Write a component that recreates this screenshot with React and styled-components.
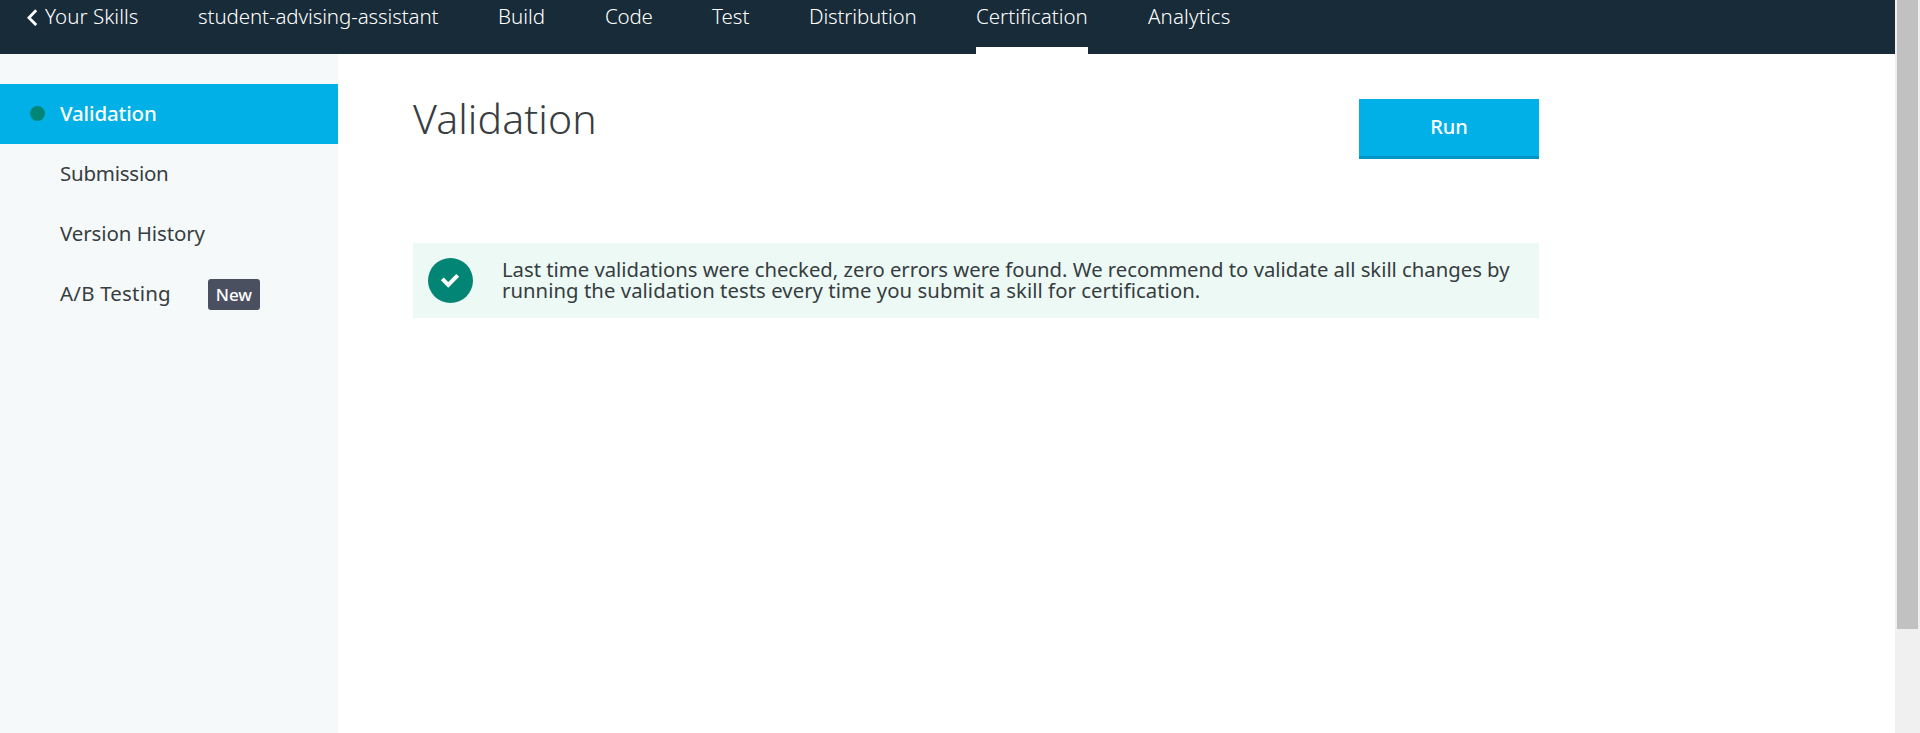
import React from 'react';
import styled, { createGlobalStyle } from 'styled-components';

const GlobalStyle = createGlobalStyle`
  * { box-sizing: border-box; }
  body {
    margin: 0;
    background: #fff;
    color: #373d41;
    font-family: "Noto Sans", "Open Sans", sans-serif;
    overflow: hidden;
  }
`;

const Viewport = styled.div`
  display: flex;
  width: 1920px;
  height: 733px;
`;

const Page = styled.div`
  display: flex;
  flex-direction: column;
  flex: 1;
`;

const TopNav = styled.nav`
  display: flex;
  align-items: flex-start;
  gap: 60px;
  height: 54px;
  padding-left: 27px;
  background: #182b38;
  color: #fff;
`;

const NavItem = styled.a`
  display: flex;
  align-items: flex-start;
  flex: none;
  width: ${(p) => p.$width}px;
  height: 54px;
  padding-top: 2px;
  border-bottom: 7px solid ${(p) => (p.$active ? '#fff' : 'transparent')};
  font-size: 20.5px;
  font-weight: 300;
  line-height: 28px;
  letter-spacing: ${(p) => p.$track || 0}px;
  white-space: nowrap;
`;

const BackIcon = styled.svg`
  flex: none;
  width: 11px;
  height: 17px;
  margin: 7px 7px 0 0;
`;

const Body = styled.div`
  display: flex;
  flex: 1;
`;

const Sidebar = styled.aside`
  width: 338px;
  padding-top: 30px;
  background: #f5f9fa;
`;

const SideItem = styled.a`
  display: flex;
  align-items: center;
  height: 60px;
  padding-left: 30px;
  background: ${(p) => (p.$active ? '#02b0e8' : 'transparent')};
  color: ${(p) => (p.$active ? '#fff' : 'inherit')};
  font-size: 20.5px;
  font-weight: ${(p) => (p.$active ? 500 : 400)};
  line-height: 28px;
  letter-spacing: ${(p) => p.$track || 0}px;
  white-space: nowrap;
`;

const StatusDot = styled.span`
  width: 15px;
  height: 15px;
  margin: 0 15px 1px 0;
  border-radius: 50%;
  background: ${(p) => (p.$on ? '#038575' : 'transparent')};
`;

const SideLabel = styled.span`
  padding-bottom: 2px;
`;

const Badge = styled.span`
  display: flex;
  align-items: center;
  justify-content: center;
  width: 52px;
  height: 31px;
  margin: 1px 0 0 37px;
  border-radius: 3px;
  background: #4b5061;
  color: #fff;
  font-size: 17px;
  font-weight: 500;
  letter-spacing: 0;
`;

const Main = styled.main`
  width: 1201px;
  padding: 45px 0 0 75px;
`;

const Header = styled.header`
  display: flex;
  justify-content: space-between;
  align-items: flex-start;
  height: 144px;
`;

const Title = styled.h1`
  margin: -9px 0 0;
  font-size: 41px;
  font-weight: 300;
  line-height: 56px;
  letter-spacing: 0.1px;
`;

const RunButton = styled.button`
  width: 180px;
  height: 60px;
  padding: 0 0 2px;
  border: 0;
  border-bottom: 3px solid #0095c4;
  background: #02b0e8;
  color: #fff;
  font: 500 20px/28px "Noto Sans", sans-serif;
`;

const Notice = styled.section`
  display: flex;
  align-items: center;
  height: 75px;
  padding: 0 15px;
  background: #ecf9f5;
`;

const CheckIcon = styled.svg`
  flex: none;
  width: 45px;
  height: 45px;
  margin-right: 29px;
`;

const NoticeText = styled.p`
  margin: 0 0 2px;
  font-size: 20.3px;
  line-height: 21px;
  white-space: nowrap;
`;

const NoticeLine = styled.span`
  display: block;
  letter-spacing: ${(p) => p.$track || 0}px;
`;

const Scrollbar = styled.div`
  width: 25px;
  padding: 0 2px;
  background: #f0f0f0;
`;

const ScrollThumb = styled.div`
  height: 629px;
  background: #c1c1c1;
`;

const navItems = [
  { label: 'student-advising-assistant', width: 240, track: -0.1 },
  { label: 'Build', width: 47 },
  { label: 'Code', width: 47, track: -0.2 },
  { label: 'Test', width: 37 },
  { label: 'Distribution', width: 107, track: -0.15 },
  { label: 'Certification', width: 112, active: true },
  { label: 'Analytics', width: 83, track: 0.15 },
];

const sideItems = [
  { label: 'Validation', track: -0.15, active: true },
  { label: 'Submission', track: -0.25 },
  { label: 'Version History', track: -0.1 },
  { label: 'A/B Testing', track: 0.2, badge: 'New' },
];

export default function App() {
  return (
    <>
      <GlobalStyle />
      <Viewport>
        <Page>
          <TopNav>
            <NavItem $width={111} $track={0.05}>
              <BackIcon viewBox="0 0 11 17">
                <path d="M9.2 1.2 1.9 8.7l7.3 7.4" fill="none" stroke="#fff" strokeWidth="2.8" />
              </BackIcon>
              Your Skills
            </NavItem>
            {navItems.map((item) => (
              <NavItem key={item.label} $width={item.width} $track={item.track} $active={item.active}>
                {item.label}
              </NavItem>
            ))}
          </TopNav>
          <Body>
            <Sidebar>
              {sideItems.map((item) => (
                <SideItem key={item.label} $active={item.active} $track={item.track}>
                  <StatusDot $on={item.active} />
                  <SideLabel>{item.label}</SideLabel>
                  {item.badge && <Badge>{item.badge}</Badge>}
                </SideItem>
              ))}
            </Sidebar>
            <Main>
              <Header>
                <Title>Validation</Title>
                <RunButton>Run</RunButton>
              </Header>
              <Notice>
                <CheckIcon viewBox="0 0 45 45">
                  <circle cx="22.5" cy="22.5" r="22.5" fill="#038575" />
                  <path d="M14.3 20.8l6 6L29.7 17.4" fill="none" stroke="#fff" strokeWidth="4" />
                </CheckIcon>
                <NoticeText>
                  <NoticeLine $track={-0.01}>
                    Last time validations were checked, zero errors were found. We recommend to validate all skill changes by
                  </NoticeLine>
                  <NoticeLine $track={0.06}>
                    running the validation tests every time you submit a skill for certification.
                  </NoticeLine>
                </NoticeText>
              </Notice>
            </Main>
          </Body>
        </Page>
        <Scrollbar>
          <ScrollThumb />
        </Scrollbar>
      </Viewport>
    </>
  );
}
